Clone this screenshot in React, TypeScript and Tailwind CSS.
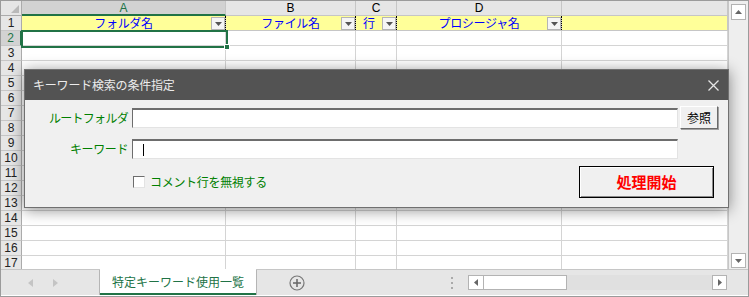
const jp = { fontFamily: '"Noto Sans CJK JP", "Noto Sans", sans-serif' };
const latin = { fontFamily: '"Liberation Sans", Arial, sans-serif' };

const cols = [
  { key: "A", width: 204, title: "フォルダ名" },
  { key: "B", width: 130, title: "ファイル名" },
  { key: "C", width: 41, title: "行" },
  { key: "D", width: 165, title: "プロシージャ名" },
  { key: "E", width: 166, title: "" },
];

function FilterButton() {
  return (
    <span className="absolute right-0 top-[1px] flex h-[13px] w-[14px] items-center justify-center border border-[#b5b5b5] bg-[#f5f5f5]">
      <svg width="7" height="4" viewBox="0 0 7 4">
        <path d="M0 0h7L3.5 4z" fill="#555" />
      </svg>
    </span>
  );
}

function Grid() {
  const rows = Array.from({ length: 17 }, (_, i) => i + 1);
  return (
    <div className="relative w-[727px] overflow-hidden">
      {/* column headers */}
      <div className="flex h-[15px]">
        <div className="relative w-[21px] border-r border-b border-[#ababab] bg-[#e6e6e6]">
          <svg className="absolute right-[2px] bottom-[2px]" width="8" height="8" viewBox="0 0 8 8">
            <path d="M8 0v8H0z" fill="#b9b9b9" />
          </svg>
        </div>
        {cols.map((c, i) => (
          <div
            key={c.key}
            style={{ width: c.width, ...latin }}
            className={
              i === 0
                ? "flex items-center justify-center border-r border-b-2 border-r-[#c6c6c6] border-b-[#217346] bg-[#d2d2d2] text-[12px] text-[#217346]"
                : "flex items-center justify-center border-r border-b border-[#c6c6c6] bg-[#e6e6e6] text-[12px] text-black"
            }
          >
            {i < 4 ? c.key : ""}
          </div>
        ))}
      </div>
      {rows.map((r) => (
        <div key={r} className="flex h-[15px]">
          <div
            style={latin}
            className={
              r === 2
                ? "flex w-[21px] items-center justify-center border-r-2 border-b border-r-[#217346] border-b-[#c6c6c6] bg-[#d2d2d2] text-[12px] leading-none text-[#217346]"
                : "flex w-[21px] items-center justify-center border-r border-b border-r-[#ababab] border-b-[#c6c6c6] bg-[#e6e6e6] text-[12px] leading-none text-[#222]"
            }
          >
            {r}
          </div>
          {cols.map((c, i) => (
            <div
              key={c.key}
              style={{ width: c.width }}
              className={
                r === 1
                  ? "relative flex items-center border-r border-b border-[#c6c6c6] bg-[#ffff99]"
                  : "border-r border-b border-[#d4d4d4] bg-white"
              }
            >
              {r === 1 && c.title && (
                <>
                  <span
                    style={jp}
                    className={
                      c.key === "C"
                        ? "w-[26px] text-center text-[12px] leading-none text-[#0000ff]"
                        : "w-full text-center text-[12px] leading-none tracking-[-0.3px] text-[#0000ff]"
                    }
                  >
                    {c.title}
                  </span>
                  <FilterButton />
                </>
              )}
              {r === 1 && i < 4 && (
                <span className="absolute right-[-1px] top-0 h-full border-r border-dotted border-black" />
              )}
            </div>
          ))}
        </div>
      ))}
      {/* active cell A2 */}
      <div className="absolute left-[20px] top-[29px] h-[18px] w-[207px] border-2 border-[#217346]" />
      <div className="absolute left-[223px] top-[43px] h-[6px] w-[6px] border border-white bg-[#217346]" />
    </div>
  );
}

function VScroll() {
  return (
    <div className="flex w-[20px] flex-col items-center justify-between border-l border-[#c6c6c6] bg-[#eeeeee] pt-[3px] pb-[1px]">
      <div className="flex h-[16px] w-[15px] items-center justify-center border border-[#b3b3b3] bg-white">
        <svg width="7" height="4" viewBox="0 0 7 4">
          <path d="M0 4h7L3.5 0z" fill="#666" />
        </svg>
      </div>
      <div className="flex h-[15px] w-[15px] items-center justify-center border border-[#b3b3b3] bg-white">
        <svg width="7" height="4" viewBox="0 0 7 4">
          <path d="M0 0h7L3.5 4z" fill="#666" />
        </svg>
      </div>
    </div>
  );
}

function Dialog() {
  return (
    <div
      style={jp}
      className="absolute left-[23px] top-[68px] flex h-[139px] w-[705px] flex-col border border-[#707070] bg-[#f0f0f0] shadow-[0_2px_14px_rgba(0,0,0,0.45)]"
    >
      <div className="flex h-[30px] items-center justify-between bg-[#535353] pl-[8px] pr-[9px]">
        <span className="text-[12px] tracking-[-0.2px] text-[#ececec]">キーワード検索の条件指定</span>
        <svg width="11" height="11" viewBox="0 0 11 11">
          <path d="M0.5 0.5l10 10M10.5 0.5l-10 10" stroke="#e6e6e6" strokeWidth="1.3" />
        </svg>
      </div>
      <div className="flex flex-col pt-[6px]">
        <div className="flex h-[23px] items-center">
          <span className="w-[103px] text-right text-[12px] tracking-[-0.7px] text-[#008000]">ルートフォルダ</span>
          <div className="ml-[4px] h-[20px] w-[546px] border-t-2 border-l border-r border-b border-t-[#6d6d6d] border-l-[#6d6d6d] border-r-[#e3e3e3] border-b-[#e3e3e3] bg-white" />
          <button className="ml-[2px] flex h-[23px] w-[38px] items-center justify-center border border-t-white border-l-white border-r-[#6a6a6a] border-b-[#6a6a6a] bg-[#f0f0f0] text-[12px] text-black shadow-[1px_1px_0_#a0a0a0]">
            参照
          </button>
        </div>
        <div className="mt-[10px] flex h-[20px] items-center">
          <span className="w-[103px] text-right text-[12px] tracking-[-0.4px] text-[#008000]">キーワード</span>
          <div className="ml-[4px] flex h-[20px] w-[546px] items-center border-t-2 border-l border-r border-b border-t-[#6d6d6d] border-l-[#6d6d6d] border-r-[#e3e3e3] border-b-[#e3e3e3] bg-white pl-[10px]">
            <span className="h-[12px] w-[1px] bg-black" />
          </div>
        </div>
        <div className="mt-[7px] flex h-[32px] items-center">
          <span className="ml-[108px] h-[12px] w-[12px] border border-t-[#6d6d6d] border-l-[#6d6d6d] border-r-[#e3e3e3] border-b-[#e3e3e3] bg-white" />
          <span className="ml-[5px] text-[12px] tracking-[-0.3px] text-[#008000]">コメント行を無視する</span>
          <button className="ml-auto mr-[14px] flex h-[32px] w-[135px] items-center justify-center border border-black bg-[#f0f0f0] shadow-[inset_1px_1px_0_#ffffff,inset_-1px_-1px_0_#8a8a8a] text-[15px] font-bold text-[#ff0000]">
            処理開始
          </button>
        </div>
      </div>
    </div>
  );
}

function TabBar() {
  return (
    <div className="flex h-[26px] border-t border-[#c6c6c6] bg-[#e6e6e6]">
      <div className="flex w-[99px] items-center gap-[20px] border-r border-[#b5b5b5] pl-[27px]">
        <svg width="5" height="8" viewBox="0 0 5 8">
          <path d="M5 0v8L0 4z" fill="#c4c4c4" />
        </svg>
        <svg width="5" height="8" viewBox="0 0 5 8">
          <path d="M0 0v8l5-4z" fill="#c4c4c4" />
        </svg>
      </div>
      <div className="-mt-[1px] flex w-[156px] items-center justify-center border-b-2 border-[#217346] bg-white pt-[1px]">
        <span style={jp} className="text-[12px] text-[#217346]">特定キーワード使用一覧</span>
      </div>
      <div className="flex w-[80px] items-center justify-center border-l border-[#b5b5b5]">
        <svg width="16" height="16" viewBox="0 0 16 16">
          <circle cx="8" cy="8" r="7" fill="none" stroke="#777" strokeWidth="1.2" />
          <path d="M8 4v8M4 8h8" stroke="#666" strokeWidth="1.5" />
        </svg>
      </div>
      <div className="flex w-[132px] items-center justify-end pr-[14px]">
        <svg width="3" height="12" viewBox="0 0 3 12">
          <rect x="0" y="0" width="2" height="2" fill="#aaa" />
          <rect x="0" y="5" width="2" height="2" fill="#aaa" />
          <rect x="0" y="10" width="2" height="2" fill="#aaa" />
        </svg>
      </div>
      <div className="flex items-center">
        <div className="flex h-[15px] w-[16px] items-center justify-center border border-[#b3b3b3] bg-white">
          <svg width="4" height="7" viewBox="0 0 4 7">
            <path d="M4 0v7L0 3.5z" fill="#666" />
          </svg>
        </div>
        <div className="h-[15px] w-[83px] border-y border-r border-[#b3b3b3] bg-white" />
        <div className="h-[15px] w-[145px] bg-[#e0e0e0]" />
        <div className="flex h-[15px] w-[15px] items-center justify-center border border-[#b3b3b3] bg-white">
          <svg width="4" height="7" viewBox="0 0 4 7">
            <path d="M0 0v7l4-3.5z" fill="#666" />
          </svg>
        </div>
      </div>
    </div>
  );
}

export default function App() {
  return (
    <div className="relative h-[297px] w-[749px] overflow-hidden border border-[#9b9b9b] bg-white">
      <div className="flex h-[268px]">
        <Grid />
        <VScroll />
      </div>
      <TabBar />
      <Dialog />
    </div>
  );
}
